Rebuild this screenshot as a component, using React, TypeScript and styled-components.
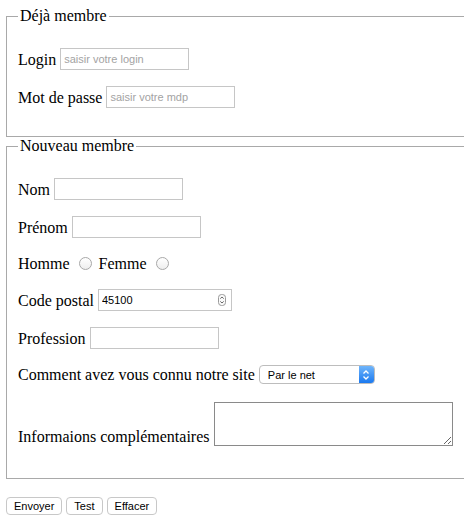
import React from 'react';
import styled, { createGlobalStyle } from 'styled-components';

const GlobalStyle = createGlobalStyle`
  html, body {
    margin: 0;
    padding: 0;
    background: #ffffff;
    overflow: hidden;
  }
  body {
    font-family: "Liberation Serif", "Times New Roman", serif;
    font-size: 16px;
    color: #000000;
  }
`;

const Page = styled.form`
  padding: 7px 0 0 6px;
  width: 480px;
`;

const Fieldset = styled.fieldset`
  margin: 0;
  padding: 7px 11px ${(props: { $bottom: number }) => props.$bottom}px;
  border: 1px solid #a9a9a9;
  min-width: 0;
`;

const Legend = styled.legend`
  padding: 0 2px;
  font-size: 16px;
  line-height: 18px;
`;

const Row = styled.div<{ $top?: number; $align?: string }>`
  display: flex;
  align-items: ${(props) => props.$align || 'center'};
  min-height: 19px;
  margin: ${(props) => props.$top ?? 16}px 0 16px;
  line-height: 19px;
`;

const Label = styled.label`
  margin-right: 4px;
  white-space: nowrap;
`;

const TextInput = styled.input<{ $width: number }>`
  box-sizing: border-box;
  width: ${(props) => props.$width}px;
  height: 22px;
  margin: 0;
  padding: 0 3px;
  border: 1px solid #c6c6c6;
  border-radius: 0;
  font-family: "Liberation Sans", Arial, sans-serif;
  font-size: 11px;
  color: #000;
  outline: none;

  &::placeholder {
    color: #a3a3a3;
  }
`;

const RadioLabel = styled.span`
  white-space: nowrap;
`;

const Radio = styled.input`
  appearance: none;
  box-sizing: border-box;
  width: 13px;
  height: 13px;
  margin: 0 7px 0 9px;
  border: 1px solid #a8a8a8;
  border-radius: 50%;
  background: linear-gradient(#ffffff, #eeeeee);

  &:checked {
    background: radial-gradient(circle, #333 0 3px, #fff 3.5px);
  }
`;

const NumberBox = styled.div`
  box-sizing: border-box;
  display: flex;
  align-items: center;
  width: 134px;
  height: 22px;
  border: 1px solid #c6c6c6;
  padding: 0 5px 0 3px;
`;

const NumberField = styled.input`
  flex: 1;
  min-width: 0;
  border: none;
  padding: 0;
  margin: 0;
  font-family: "Liberation Sans", Arial, sans-serif;
  font-size: 11px;
  outline: none;
`;

const SelectBox = styled.div`
  box-sizing: border-box;
  display: flex;
  width: 116px;
  height: 19px;
  border: 1px solid #bdbdbd;
  border-radius: 4px;
  overflow: hidden;
  background: #fff;
`;

const SelectField = styled.select`
  appearance: none;
  flex: 1;
  min-width: 0;
  border: none;
  margin: 0;
  padding: 0 0 0 8px;
  background: transparent;
  font-family: "Liberation Sans", Arial, sans-serif;
  font-size: 11px;
  color: #000;
  outline: none;
`;

const SelectArrow = styled.span`
  display: flex;
  align-items: center;
  justify-content: center;
  width: 15px;
  background: linear-gradient(#6fb5fb, #1b79ef);
`;

const TextArea = styled.textarea`
  box-sizing: border-box;
  width: 239px;
  height: 44px;
  margin: 0;
  border: 1px solid #8a8a8a;
  border-radius: 0;
  outline: none;
  resize: both;
`;

const AreaLabel = styled.label`
  margin-right: 4px;
  white-space: nowrap;
  line-height: 16px;
  padding-bottom: 1px;
`;

const Actions = styled.div`
  display: flex;
  gap: 4px;
  margin-top: 18px;
`;

const Button = styled.button`
  box-sizing: border-box;
  height: 18px;
  margin: 0;
  padding: 0 7px;
  border: 1px solid #c8c8c8;
  border-radius: 4px;
  background: #ffffff;
  font-family: "Liberation Sans", Arial, sans-serif;
  font-size: 11px;
  color: #000;
  line-height: 16px;
`;

const Spinner = () => (
  <svg width="8" height="12" viewBox="0 0 8 12">
    <rect x="0.5" y="0.5" width="7" height="11" rx="3" fill="#fafafa" stroke="#9a9a9a" />
    <path d="M2.3 4.6 L4 3 L5.7 4.6" fill="none" stroke="#555" strokeWidth="0.9" />
    <path d="M2.3 7.4 L4 9 L5.7 7.4" fill="none" stroke="#555" strokeWidth="0.9" />
  </svg>
);

const Chevrons = () => (
  <svg width="8" height="12" viewBox="0 0 8 12">
    <path d="M1.5 4.5 L4 2 L6.5 4.5" fill="none" stroke="#fff" strokeWidth="1.3" />
    <path d="M1.5 7.5 L4 10 L6.5 7.5" fill="none" stroke="#fff" strokeWidth="1.3" />
  </svg>
);

const App: React.FC = () => {
  return (
    <>
      <GlobalStyle />
      <Page onSubmit={(e) => e.preventDefault()}>
        <Fieldset $bottom={12}>
          <Legend>Déjà membre</Legend>
          <Row>
            <Label htmlFor="login">Login</Label>
            <TextInput id="login" $width={129} placeholder="saisir votre login" />
          </Row>
          <Row>
            <Label htmlFor="mdp">Mot de passe</Label>
            <TextInput id="mdp" type="password" $width={129} placeholder="saisir votre mdp" />
          </Row>
        </Fieldset>

        <Fieldset $bottom={16}>
          <Legend>Nouveau membre</Legend>
          <Row>
            <Label htmlFor="nom">Nom</Label>
            <TextInput id="nom" $width={129} />
          </Row>
          <Row>
            <Label htmlFor="prenom">Prénom</Label>
            <TextInput id="prenom" $width={129} />
          </Row>
          <Row>
            <RadioLabel>Homme</RadioLabel>
            <Radio type="radio" name="sexe" value="h" />
            <RadioLabel>Femme</RadioLabel>
            <Radio type="radio" name="sexe" value="f" />
          </Row>
          <Row>
            <Label htmlFor="cp">Code postal</Label>
            <NumberBox>
              <NumberField id="cp" defaultValue="45100" />
              <Spinner />
            </NumberBox>
          </Row>
          <Row>
            <Label htmlFor="profession">Profession</Label>
            <TextInput id="profession" $width={129} />
          </Row>
          <Row>
            <Label htmlFor="connu">Comment avez vous connu notre site</Label>
            <SelectBox>
              <SelectField id="connu" defaultValue="net">
                <option value="net">Par le net</option>
                <option value="ami">Par un ami</option>
                <option value="pub">Par la publicité</option>
              </SelectField>
              <SelectArrow>
                <Chevrons />
              </SelectArrow>
            </SelectBox>
          </Row>
          <Row $top={18} $align="flex-end">
            <AreaLabel htmlFor="infos">Informaions complémentaires</AreaLabel>
            <TextArea id="infos" />
          </Row>
        </Fieldset>

        <Actions>
          <Button type="submit">Envoyer</Button>
          <Button type="button">Test</Button>
          <Button type="reset">Effacer</Button>
        </Actions>
      </Page>
    </>
  );
};

export default App;
